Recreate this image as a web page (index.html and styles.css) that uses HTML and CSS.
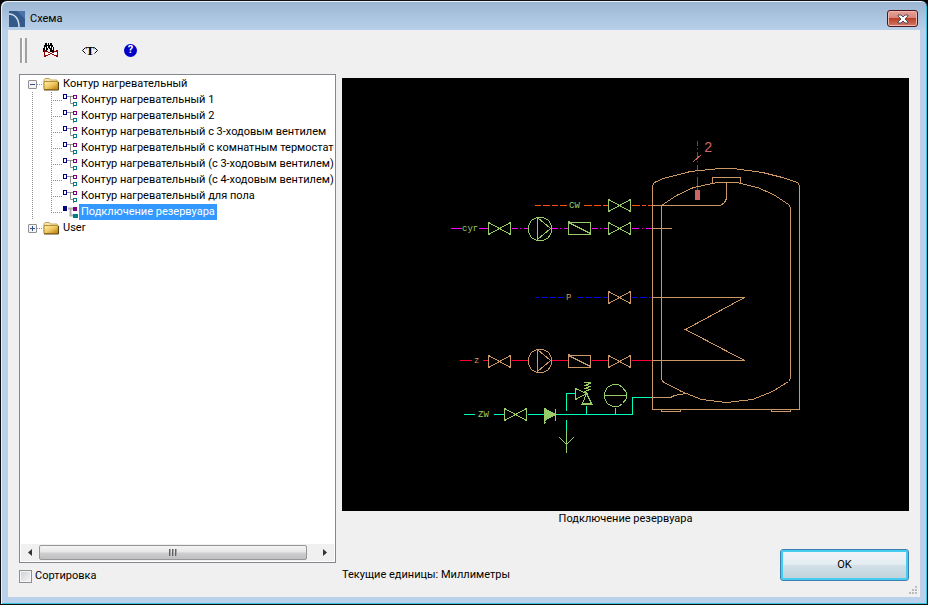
FILE: index.html
```html
<!DOCTYPE html>
<html lang="ru">
<head>
  <meta charset="UTF-8" />
  <meta name="viewport" content="width=device-width, initial-scale=1.0" />
  <title>Схема</title>
  <link rel="stylesheet" href="styles.css">
</head>
<body>
  <!-- shared symbols -->
  <svg class="defs" width="0" height="0" aria-hidden="true">
    <defs>
      <linearGradient id="folderFill" x1="0" y1="0" x2="1" y2="1">
        <stop offset="0" stop-color="#fff0b0" />
        <stop offset="0.5" stop-color="#f0c860" />
        <stop offset="1" stop-color="#b87808" />
      </linearGradient>
      <symbol id="folder" viewBox="0 0 16 16">
        <path d="M1 13V3.500L2 2.500H6.500L7.500 4H14V13Z" fill="#f4e4b0" stroke="#c8a860" />
        <path d="M1 5.500H15V13.500H1Z" fill="url(#folderFill)" stroke="#b88c30" />
        <path d="M1 14H15.500V6" fill="none" stroke="#604810" />
      </symbol>
      <symbol id="scheme" viewBox="0 0 16 16">
        <path d="M5 4.500H11M8.500 5V11.500H11M11.500 13V15" fill="none" stroke="#909090" />
        <rect x="1.500" y="2.500" width="3" height="4" fill="#fff" stroke="#000080" />
        <rect x="11.500" y="3.500" width="3" height="3" fill="#fff" stroke="#800080" />
        <rect x="11.500" y="10.500" width="3" height="3" fill="#fff" stroke="#008080" />
      </symbol>
      <symbol id="scheme-on" viewBox="0 0 16 16">
        <path d="M6 4.500H11M8.500 5V11.500H11" fill="none" stroke="#b0b0b0" stroke-width="2" />
        <rect x="1" y="2" width="4" height="5" fill="#000080" />
        <rect x="11" y="3" width="4" height="4" fill="#800080" />
        <rect x="11" y="10" width="5" height="4" fill="#008080" />
      </symbol>
      <symbol id="valve" viewBox="0 0 24 14" overflow="visible">
        <path d="M0 0V12L22 0V12Z" />
      </symbol>
      <symbol id="pump" viewBox="0 0 24 24" overflow="visible">
        <path d="M8 0H15L20 3L23 8V15L20 20L15 23H8L3 20L0 15V8L3 3Z" />
        <path d="M9 0V23M9 0L22 11L9 22" />
      </symbol>
      <symbol id="filter" viewBox="0 0 24 14" overflow="visible">
        <path d="M0 0H22V12H0ZM0 0L22 11M-1 -1H1M-1 0H1" />
      </symbol>
    </defs>
  </svg>

  <div class="window">
    <header class="titlebar">
      <svg class="app-icon" width="16" height="16" viewBox="0 0 16 16">
        <rect width="16" height="16" fill="#345a8c" />
        <path d="M0 0H16V8L8 0Z" fill="#4a74a8" />
        <path d="M0 3C6 3 10 8 10 16" fill="none" stroke="#d4e0ee" stroke-width="1.500" />
      </svg>
      <h1>Схема</h1>
      <button class="close" type="button" aria-label="Закрыть">
        <svg width="12" height="10" viewBox="0 0 12 10">
          <path d="M1 1H4L6 3L8 1H11V2L8 5L11 8V9H8L6 7L4 9H1V8L4 5L1 2Z" fill="#fff" stroke="#4c4c5c" />
        </svg>
      </button>
    </header>

    <main class="client">
      <div class="toolbar">
        <span class="grip"></span>
        <button type="button" aria-label="Найти">
          <svg width="16" height="16" viewBox="0 0 16 16" shape-rendering="crispEdges">
            <path d="M3 1H5V3H6V1H7V3H8V1H10V3H11V5H12V10H8V7H7V6H6V8H5V10H1V6H2V3H3Z" fill="#000" />
            <path d="M3.500 5V8M5.500 4V6M8.500 4V6M10.500 5V8" stroke="#fff" />
            <path d="M2.500 8.500V14.500L15.500 8.500V14.500L2.500 8.500Z" fill="#fff" stroke="#900000" />
          </svg>
        </button>
        <button type="button" class="text-tool" aria-label="Текст">
          <svg width="16" height="16" viewBox="0 0 16 16">
            <path d="M3.500 5.500L0.500 8.500L3.500 11.500M12.500 5.500L15.500 8.500L12.500 11.500" fill="none" stroke="#000" />
            <text x="8" y="13" text-anchor="middle">T</text>
          </svg>
        </button>
        <button type="button" class="help" aria-label="Справка">?</button>
      </div>

      <div class="content">
        <section class="browser">
          <div class="tree">
            <ul class="roots">
              <li>
                <div class="root"><button type="button" class="toggle minus" aria-label="Свернуть"></button><svg class="icon"><use href="#folder" /></svg><span>Контур нагревательный</span></div>
                <ul class="children">
                  <li><svg class="icon"><use href="#scheme" /></svg><span>Контур нагревательный 1</span></li>
                  <li><svg class="icon"><use href="#scheme" /></svg><span>Контур нагревательный 2</span></li>
                  <li><svg class="icon"><use href="#scheme" /></svg><span>Контур нагревательный с 3-ходовым вентилем</span></li>
                  <li><svg class="icon"><use href="#scheme" /></svg><span>Контур нагревательный с комнатным термостатом</span></li>
                  <li><svg class="icon"><use href="#scheme" /></svg><span>Контур нагревательный (с 3-ходовым вентилем)</span></li>
                  <li><svg class="icon"><use href="#scheme" /></svg><span>Контур нагревательный (с 4-ходовым вентилем)</span></li>
                  <li><svg class="icon"><use href="#scheme" /></svg><span>Контур нагревательный для пола</span></li>
                  <li class="selected"><svg class="icon"><use href="#scheme-on" /></svg><span>Подключение резервуара</span></li>
                </ul>
              </li>
              <li>
                <div class="root"><button type="button" class="toggle plus" aria-label="Развернуть"></button><svg class="icon"><use href="#folder" /></svg><span>User</span></div>
              </li>
            </ul>
            <div class="scrollbar">
              <button type="button" class="arrow" aria-label="Влево"><svg width="4" height="7" viewBox="0 0 4 7"><path d="M4 0V7L0 3.500Z" fill="#333" /></svg></button>
              <div class="thumb"><i></i><i></i><i></i></div>
              <button type="button" class="arrow right" aria-label="Вправо"><svg width="4" height="7" viewBox="0 0 4 7"><path d="M0 0V7L4 3.500Z" fill="#333" /></svg></button>
            </div>
          </div>
          <label class="sort"><input type="checkbox"> Сортировка</label>
        </section>

        <section class="detail">
          <div class="preview">
            <svg viewBox="342 78 567 433" shape-rendering="crispEdges">
              <g transform="translate(.5 .5)" fill="none">
                <!-- circulation -->
                <path d="M534 205H540M542 205H549M551 205H557M559 205H566M583 205H591M593 205H600M602 205H608M631 205H639M641 205H645M647 205H652" stroke="#ff4d10" />
                <!-- cold loop -->
                <path d="M450 228H461M478 228H488M511 228H517M519 228H520M523 228H527M551 228H557M559 228H560M563 228H568M591 228H597M599 228H600M603 228H608M631 228H638M641 228H642M645 228H652" stroke="#ff00ff" />
                <path d="M534 297H538M540 297H547M549 297H555M557 297H563M576 297H582M584 297H591M593 297H600M602 297H608M631 297H637M639 297H646M648 297H652" stroke="#0000e0" />
                <path d="M459 360H471M482 360H488M511 360H528M551 360H568M591 360H608M631 360H652" stroke="#ff0033" />
                <!-- cold water supply -->
                <path d="M463 414H474M493 414H504M527 414H544M556 414H632V397H652M575 393H566V410M566 419V430M586 405V414M615 407V414" stroke="#00ffbf" />
                <path d="M697 140V145M697 147V148M697 151V158M697 160V161M697 164V170M697 172V173M697 176V190" stroke="#008060" />

                <g stroke="#99cc66">
                  <use href="#valve" x="608" y="199" width="24" height="14" />
                  <use href="#valve" x="488" y="222" width="24" height="14" />
                  <use href="#pump" x="528" y="217" width="24" height="24" />
                  <use href="#filter" x="568" y="222" width="24" height="14" />
                  <use href="#valve" x="608" y="222" width="24" height="14" />
                  <use href="#valve" x="504" y="408" width="24" height="14" />
                  <path d="M544 408V420L555 414Z" fill="#99cc66" />
                  <path d="M555 408V420M544 420V423M543 422H545" />
                  <path d="M566 430V452M559 437L566 444L573 437" />
                  <path d="M575 388V399L586 393ZM586 393L582 403H591ZM580 404H592M586 393L584 391L590 389L584 388L590 386L584 385L590 383L584 382H590" />
                  <path d="M612 384H618L622 387L626 392V398L622 403L618 406H612L607 403L604 398V392L607 387ZM603 395H626" />
                </g>

                <g stroke="#cc9966">
                  <use href="#valve" x="608" y="291" width="24" height="14" />
                  <use href="#valve" x="488" y="355" width="24" height="14" />
                  <use href="#pump" x="528" y="349" width="24" height="24" />
                  <use href="#filter" x="568" y="355" width="24" height="14" />
                  <use href="#valve" x="608" y="355" width="24" height="14" />
                  <!-- tank shell -->
                  <path d="M652 185L654 182L663 178L690 171L720 168H733L762 172L782 177L797 182L799 185V409H652Z" />
                  <path d="M661 409V411H680V409M771 409V411H790V409" />
                  <!-- inner vessel -->
                  <path d="M661 378V205L676 195L693 187L712 183V177H740V183L757 187L773 194L788 204L790 207V378L788 381L772 391L752 399L726 402L701 399L681 391L662 381Z" />
                  <path d="M713 183L716 182H737L740 183M726 182V198L724 202L720 205H652M652 228H671" />
                  <path d="M652 297H744L685 329L744 360H652M652 397H670L674 395L685 393" />
                </g>

                <path d="M693 161L701 154" stroke="#cc6666" />
                <rect x="695" y="190" width="4" height="9" fill="#cc6666" stroke="#cc6666" />
              </g>
              <g class="tags">
                <text x="569" y="208">CW</text>
                <text x="462" y="231">суг</text>
                <text x="566" y="300" class="hot">P</text>
                <text x="474" y="363" class="hot">z</text>
                <text x="478" y="417">ZW</text>
                <text x="704" y="152" class="mark">2</text>
              </g>
            </svg>
          </div>
          <p class="caption">Подключение резервуара</p>
          <div class="footer">
            <p>Текущие единицы: Миллиметры</p>
            <button type="button" class="ok">OK</button>
          </div>
        </section>
      </div>
      <svg class="size-grip" width="9" height="9" viewBox="0 0 9 9">
        <path d="M6 0h2v2h-2zM3 3h2v2h-2zM6 3h2v2h-2zM0 6h2v2h-2zM3 6h2v2h-2zM6 6h2v2h-2z" fill="#bcbcbc" />
      </svg>
    </main>
  </div>
</body>
</html>
```
FILE: styles.css
```css
* {
  box-sizing: border-box;
}
body {
  margin: 0;
  background: #000;
  color: #000;
  font-family: Roboto, sans-serif;
  font-size: 11px;
  line-height: 16px;
}
ul, p, h1 {
  margin: 0;
  padding: 0;
}
ul {
  list-style: none;
}
button {
  padding: 0;
  border: none;
  background: none;
  color: #000;
  font: inherit;
}
.defs {
  position: absolute;
}
.window {
  display: flex;
  flex-direction: column;
  min-height: 100vh;
  border: 1px solid #111;
  border-radius: 7px 7px 0 0;
  padding: 0 7px 7px;
  background: linear-gradient(#9ab5d2, #b9d1ea 30px);
  box-shadow: inset 1px 1px #e8f2fa, inset -1px -1px #35c3de;
}

/* title bar */
.titlebar {
  display: flex;
  align-items: center;
  gap: 5px;
  height: 29px;
  padding: 6px 2px 0 1px;
}
.titlebar h1 {
  flex: 1;
  font-size: 11px;
  font-weight: normal;
}
.close {
  display: flex;
  align-items: center;
  justify-content: center;
  width: 31px;
  height: 17px;
  border: 1px solid #4c1420;
  border-radius: 3px;
  background: linear-gradient(#e5a499, #d88477 48%, #bb3f28 50%, #d07a68);
  box-shadow: inset 0 0 0 1px #f0b8ae;
}

.client {
  position: relative;
  flex: 1;
  display: flex;
  flex-direction: column;
  padding: 0 11px 8px;
  background: #f0f0f0;
}

/* toolbar */
.toolbar {
  display: flex;
  align-items: center;
  gap: 16px;
  height: 44px;
  padding-bottom: 4px;
}
.toolbar button {
  display: flex;
  align-items: center;
  justify-content: center;
  width: 24px;
  height: 24px;
}
.toolbar .grip {
  width: 7px;
  height: 25px;
  margin-left: 1px;
  margin-right: -5px;
  border: solid #a0a0a0;
  border-width: 0 2px;
  box-shadow: inset 1px 0 #fff;
}
.text-tool text {
  font: bold 13px 'Liberation Serif', serif;
}
.toolbar .help {
  width: 13px;
  height: 13px;
  margin-left: 6px;
  border-radius: 50%;
  background: #0000c8;
  color: #fff;
  font-size: 11px;
  font-weight: bold;
}

.content {
  flex: 1;
  display: grid;
  grid-template-columns: 317px minmax(0, 1fr);
  gap: 6px;
}
.browser, .detail {
  display: flex;
  flex-direction: column;
  min-width: 0;
}

/* tree */
.tree {
  flex: 1;
  display: flex;
  flex-direction: column;
  border: 1px solid #828790;
  padding: 1px;
  background: #fff;
}
.roots {
  flex: 1;
  overflow: hidden;
  white-space: nowrap;
}
.icon {
  flex: none;
  width: 16px;
  height: 16px;
}
.root {
  display: flex;
  align-items: center;
  padding-left: 7px;
  background: repeating-linear-gradient(90deg, #909090 0 1px, transparent 1px 2px) 16px 8px / 6px 1px no-repeat;
}
.root .icon {
  margin-left: 6px;
  margin-right: 4px;
}
.toggle {
  width: 9px;
  height: 9px;
  border: 1px solid #909090;
  border-radius: 1px;
  background: linear-gradient(#305090, #305090) center / 5px 1px no-repeat, #f4f4f4;
}
.toggle.plus {
  background: linear-gradient(#305090, #305090) center / 5px 1px no-repeat, linear-gradient(#305090, #305090) center / 1px 5px no-repeat, #f4f4f4;
}
.children {
  margin-left: 11px;
  padding-left: 19px;
  background: repeating-linear-gradient(#909090 0 1px, transparent 1px 2px) 0 0 / 1px 100% no-repeat;
}
.children li {
  display: flex;
  height: 16px;
}
.children li::before {
  content: "";
  flex: none;
  width: 11px;
  background:
    repeating-linear-gradient(#909090 0 1px, transparent 1px 2px) 0 0 / 1px 100% no-repeat,
    repeating-linear-gradient(90deg, #909090 0 1px, transparent 1px 2px) 0 8px / 100% 1px no-repeat;
}
.children li:last-child::before {
  background-size: 1px 50%, 100% 1px;
}
.children span {
  margin-left: 1px;
  padding: 0 2px;
}
.selected span {
  background: #3399ff;
  color: #fff;
}

.scrollbar {
  display: flex;
  height: 17px;
  background: #f0f0f0;
}
.arrow {
  display: flex;
  align-items: center;
  justify-content: center;
  width: 18px;
}
.arrow.right {
  margin-left: auto;
}
.thumb {
  flex: 0 1 268px;
  display: flex;
  align-items: center;
  justify-content: center;
  gap: 1px;
  height: 15px;
  margin-top: 1px;
  border: 1px solid #979797;
  border-radius: 2px;
  background: linear-gradient(#f4f4f4, #e6e6e6 48%, #cfcfd1 52%, #c0c0c4);
}
.thumb i {
  width: 2px;
  height: 7px;
  background: linear-gradient(90deg, #606060 50%, #a8a8a8 50%);
}
.sort {
  display: flex;
  align-items: center;
  gap: 3px;
  height: 26px;
}
.sort input {
  appearance: none;
  width: 13px;
  height: 13px;
  margin: 0;
  border: 1px solid #8e8f8f;
  background: linear-gradient(135deg, #cbcfd5, #f6f6f6);
  box-shadow: inset 0 0 0 1px #f4f4f4;
}

/* preview */
.preview {
  flex: 1;
  display: flex;
  margin-top: 4px;
  background: #000;
}
.preview svg {
  width: 100%;
}
.tags {
  font-family: 'Liberation Mono', monospace;
  font-size: 9px;
  fill: #99cc66;
}
.tags .hot {
  fill: #cc9966;
}
.tags .mark {
  font-size: 14px;
  fill: #cc6666;
}
.caption {
  text-align: center;
}
.footer {
  display: flex;
  align-items: flex-end;
  justify-content: space-between;
  margin: 22px 0 8px;
}
.footer p {
  line-height: 12px;
}
.ok {
  width: 129px;
  height: 32px;
  border: 1px solid #3c7fb1;
  border-radius: 3px;
  background: linear-gradient(#f0f4f7, #e4edf2 48%, #d3e0e7 50%, #c0d2dc);
  box-shadow: inset 0 0 0 2px #45cdf0;
}
.size-grip {
  position: absolute;
  right: 2px;
  bottom: 2px;
}
```
